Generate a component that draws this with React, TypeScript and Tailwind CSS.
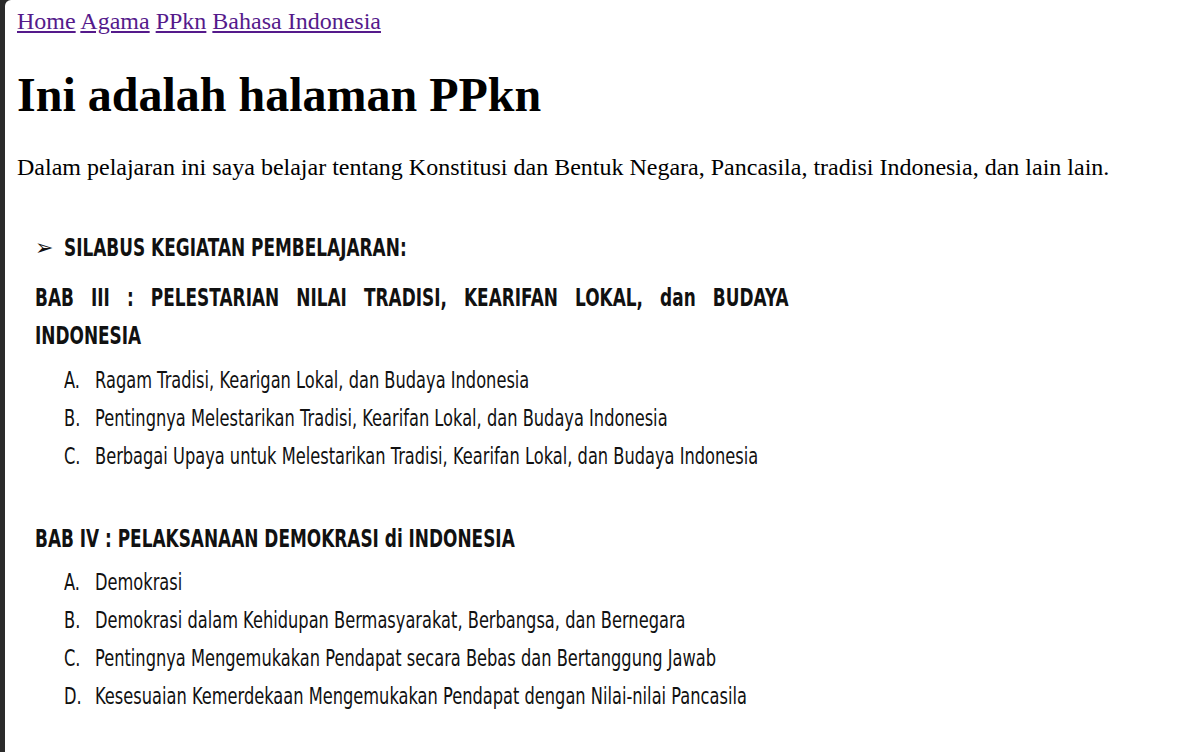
const links = ["Home", "Agama", "PPkn", "Bahasa Indonesia"];

const bab3 = [
  { l: "A.", t: "Ragam Tradisi, Kearigan Lokal, dan Budaya Indonesia" },
  { l: "B.", t: "Pentingnya Melestarikan Tradisi, Kearifan Lokal, dan Budaya Indonesia" },
  { l: "C.", t: "Berbagai Upaya untuk Melestarikan Tradisi, Kearifan Lokal, dan Budaya Indonesia" },
];

const bab4 = [
  { l: "A.", t: "Demokrasi" },
  { l: "B.", t: "Demokrasi dalam Kehidupan Bermasyarakat, Berbangsa, dan Bernegara" },
  { l: "C.", t: "Pentingnya Mengemukakan Pendapat secara Bebas dan Bertanggung Jawab" },
  { l: "D.", t: "Kesesuaian Kemerdekaan Mengemukakan Pendapat dengan Nilai-nilai Pancasila" },
];

const Narrow: React.FC<{ children: React.ReactNode; bold?: boolean }> = ({ children, bold }) => (
  <span
    className={
      bold
        ? "inline-block origin-left scale-x-[0.705] whitespace-nowrap font-bold text-[24px]"
        : "inline-block origin-left scale-x-[0.706] whitespace-nowrap text-[23px]"
    }
  >
    {children}
  </span>
);

const Item: React.FC<{ l: string; t: string }> = ({ l, t }) => (
  <div className="flex h-[38px] items-center pl-[29px]">
    <div className="w-[31px] shrink-0">
      <Narrow>{l}</Narrow>
    </div>
    <Narrow>{t}</Narrow>
  </div>
);

export default function App() {
  return (
    <div className="flex min-h-screen bg-[#2b2b2b] pl-[5px]">
      <div className="flex-1 overflow-hidden rounded-tl-[6px] bg-white px-3 pt-2 font-['Liberation_Serif',serif] text-[24px] text-black">
        <div className="leading-[27px]">
          {links.map((link, i) => (
            <span key={link}>
              <a href="#" className="text-[#551a8b] underline">
                {link}
              </a>
              {i < links.length - 1 ? " " : ""}
            </span>
          ))}
        </div>

        <h1 className="mt-[32px] text-[48px] font-bold leading-[55px]">Ini adalah halaman PPkn</h1>

        <p className="mt-[32px] leading-[27px]">
          Dalam pelajaran ini saya belajar tentang Konstitusi dan Bentuk Negara, Pancasila, tradisi Indonesia, dan lain lain.
        </p>

        <div className="mt-[48px] pl-[18px] font-['DejaVu_Sans',sans-serif] text-[#111]">
          <div className="flex h-[38px] items-center">
            <span className="w-[29px] shrink-0 text-[22px] leading-none">➢</span>
            <Narrow bold>SILABUS KEGIATAN PEMBELAJARAN:</Narrow>
          </div>

          <div className="mt-[12px] h-[38px] leading-[38px]">
            <span className="inline-block w-[1069px] origin-left scale-x-[0.705] whitespace-nowrap font-bold text-[24px] [text-align-last:justify] text-justify">
              BAB III : PELESTARIAN NILAI TRADISI, KEARIFAN LOKAL, dan BUDAYA
            </span>
          </div>
          <div className="flex h-[38px] items-center">
            <Narrow bold>INDONESIA</Narrow>
          </div>

          <div className="mt-[6px]">
            {bab3.map((it) => (
              <Item key={it.l} l={it.l} t={it.t} />
            ))}
          </div>

          <div className="mt-[45px] flex h-[38px] items-center">
            <Narrow bold>BAB IV : PELAKSANAAN DEMOKRASI di INDONESIA</Narrow>
          </div>

          <div className="mt-[5px]">
            {bab4.map((it) => (
              <Item key={it.l} l={it.l} t={it.t} />
            ))}
          </div>
        </div>
      </div>
    </div>
  );
}
